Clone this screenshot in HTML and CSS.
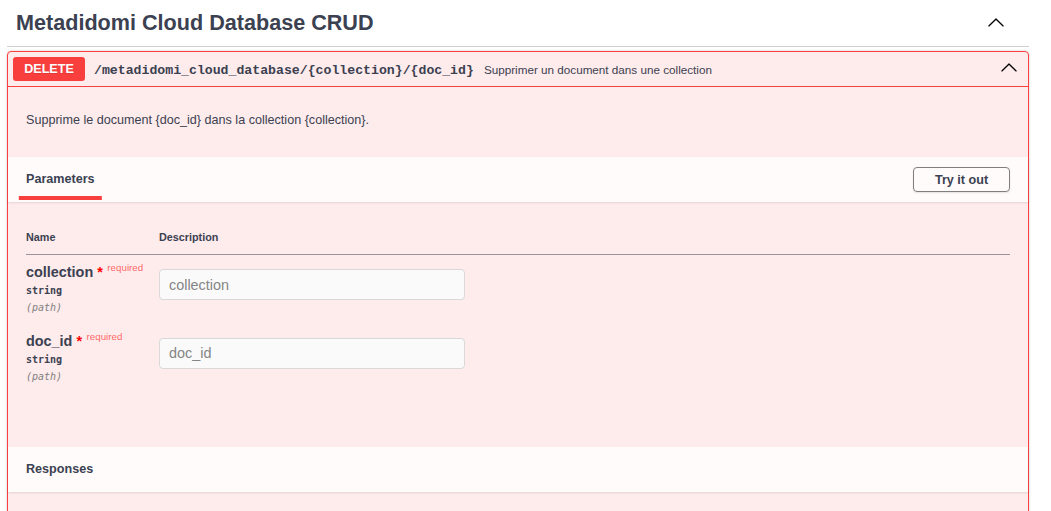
FILE: index.html
```html
<!DOCTYPE html>
<html lang="fr">
<head>
<meta charset="utf-8">
<title>Metadidomi Cloud Database CRUD</title>
<link rel="stylesheet" href="styles.css">
</head>
<body>
<div class="page">
  <h3 class="tag">
    <span class="tag-title">Metadidomi Cloud Database CRUD</span>
    <svg class="arrow tag-arrow" viewBox="0 0 20 20" width="18" height="18" aria-hidden="true"><path d="M17.418 14.908c.272.268.709.268.979 0s.271-.701 0-.969l-7.908-7.83a.697.697 0 0 0-.979 0l-7.908 7.830a.68.68 0 0 0 0 .969c.271.268.709.268.979 0L10 7.767l7.418 7.141z"/></svg>
  </h3>

  <div class="opblock">
    <div class="summary">
      <span class="method">DELETE</span>
      <span class="path">/metadidomi_cloud_database/{collection}/{doc_id}</span>
      <span class="summary-desc">Supprimer un document dans une collection</span>
      <svg class="arrow op-arrow" viewBox="0 0 20 20" width="18" height="18" aria-hidden="true"><path d="M17.418 14.908c.272.268.709.268.979 0s.271-.701 0-.969l-7.908-7.83a.697.697 0 0 0-.979 0l-7.908 7.83a.68.68 0 0 0 0 .969c.271.268.709.268.979 0L10 7.767l7.418 7.141z"/></svg>
    </div>

    <div class="body">
      <div class="description">
        <p>Supprime le document {doc_id} dans la collection {collection}.</p>
      </div>

      <div class="section-header">
        <div class="tab"><h4><span class="tab-label">Parameters</span></h4></div>
        <button class="btn" type="button">Try it out</button>
      </div>

      <div class="params">
        <table class="param-table">
          <thead>
            <tr><th class="col-name">Name</th><th class="col-desc">Description</th></tr>
          </thead>
          <tbody>
            <tr>
              <td class="col-name">
                <div class="param-name">collection<span class="star">&nbsp;*</span><span class="req">required</span></div>
                <div class="param-type">string</div>
                <div class="param-in">(path)</div>
              </td>
              <td class="col-desc"><input class="param-input" type="text" placeholder="collection"></td>
            </tr>
            <tr>
              <td class="col-name">
                <div class="param-name">doc_id<span class="star">&nbsp;*</span><span class="req">required</span></div>
                <div class="param-type">string</div>
                <div class="param-in">(path)</div>
              </td>
              <td class="col-desc"><input class="param-input" type="text" placeholder="doc_id"></td>
            </tr>
          </tbody>
        </table>
      </div>

      <div class="section-header">
        <h4 class="resp-title">Responses</h4>
      </div>
      <div class="responses"></div>
    </div>
  </div>
</div>
</body>
</html>
```
FILE: styles.css
```css
* { box-sizing: border-box; }

html, body {
  margin: 0;
  background: #fff;
}

body {
  font-family: "Liberation Sans", Arial, sans-serif;
  color: #3b4151;
  overflow: hidden;
}

.page {
  padding: 0 22px 0 7px;
}

.tag {
  display: flex;
  align-items: center;
  height: 47px;
  margin: 0 0 4px;
  padding: 0 24px 0 9px;
  border-bottom: 1px solid #cfd0d3;
  font-size: 21.6px;
  font-weight: 700;
  color: #3b4151;
}

.tag-title {
  flex: 1;
  line-height: normal;
}

.arrow {
  display: block;
  flex: none;
  fill: #000;
}

.tag-arrow {
  margin-bottom: 3px;
}

.opblock {
  border: 1px solid #f93e3e;
  border-radius: 4px;
  background: rgba(249, 62, 62, 0.1);
  box-shadow: 0 0 3px rgba(0, 0, 0, 0.19);
}

.summary {
  display: flex;
  align-items: center;
  height: 35px;
  padding: 5px;
  border-bottom: 1px solid #f93e3e;
}

.method {
  flex: none;
  width: 72px;
  height: 24px;
  line-height: 24px;
  border-radius: 3px;
  background: #f93e3e;
  color: #fff;
  font-size: 12.6px;
  font-weight: 700;
  text-align: center;
  text-shadow: 0 1px 0 rgba(0, 0, 0, 0.1);
}

.path {
  padding: 3px 10px 0 9px;
  font-family: "Liberation Mono", "DejaVu Sans Mono", monospace;
  font-size: 13.2px;
  font-weight: 700;
  color: #3b4151;
}

.summary-desc {
  flex: 1;
  padding-top: 1px;
  font-size: 11.7px;
  color: #3b4151;
}

.op-arrow {
  margin: 0 5px 5px 0;
}

.description {
  padding: 26px 18px 29px;
}

.description p {
  margin: 0;
  font-size: 12.6px;
  line-height: 15px;
}

.section-header {
  display: flex;
  align-items: center;
  height: 45px;
  padding: 0 18px;
  background: rgba(255, 255, 255, 0.8);
  box-shadow: 0 1px 2px rgba(0, 0, 0, 0.1);
  position: relative;
}

.tab {
  flex: 1;
}

.tab h4 {
  margin: 0 0 2px;
}

.tab h4,
.resp-title {
  font-size: 12.6px;
  font-weight: 700;
  color: #3b4151;
}

.resp-title {
  margin: 0 0 1px;
}

.tab-label {
  position: relative;
}

.tab-label::after {
  content: "";
  position: absolute;
  left: 50%;
  bottom: -14.5px;
  width: 120%;
  height: 4px;
  transform: translateX(-50%);
  background: #f93e3e;
}

.btn {
  width: 97px;
  height: 25px;
  padding: 0;
  border: 1px solid #7f7f7f;
  border-radius: 4px;
  background: transparent;
  box-shadow: 0 1px 2px rgba(0, 0, 0, 0.1);
  font-family: "Liberation Sans", Arial, sans-serif;
  font-size: 12.6px;
  font-weight: 700;
  color: #3b4151;
}

.params {
  padding: 18px 18px 55px;
}

.param-table {
  width: 100%;
  border-collapse: collapse;
}

.param-table th {
  padding: 10.8px 0 10.8px;
  border-bottom: 1px solid rgba(59, 65, 81, 0.3);
  font-size: 10.8px;
  font-weight: 700;
  text-align: left;
  line-height: 12.4px;
  color: #3b4151;
}

.param-table td {
  padding: 9px 0;
  vertical-align: top;
}

.col-name {
  width: 133px;
}

.param-name {
  font-size: 14.4px;
  font-weight: 700;
  line-height: 16.5px;
  white-space: nowrap;
}

.star {
  color: #f00;
}

.req {
  position: relative;
  top: -6px;
  padding-left: 4.5px;
  font-size: 9.8px;
  font-weight: 400;
  line-height: 1;
  color: rgba(255, 0, 0, 0.6);
}

.param-type {
  padding: 4.5px 0;
  font-family: "DejaVu Sans Mono", monospace;
  font-size: 10px;
  font-weight: 700;
  line-height: 12.6px;
  color: #3b4151;
}

.param-in {
  font-family: "DejaVu Sans Mono", monospace;
  font-size: 10px;
  font-style: italic;
  line-height: 12.6px;
  color: #808080;
}

.param-input {
  display: block;
  width: 306px;
  height: 31px;
  margin: 5px 0;
  padding: 0 9px;
  border: 1px solid #d9d9d9;
  border-radius: 4px;
  background: #fafafa;
  font-family: "Liberation Sans", Arial, sans-serif;
  font-size: 14.4px;
  color: #3b4151;
  outline: none;
}

.param-input::placeholder {
  color: #858585;
}

.responses {
  height: 120px;
}
```
